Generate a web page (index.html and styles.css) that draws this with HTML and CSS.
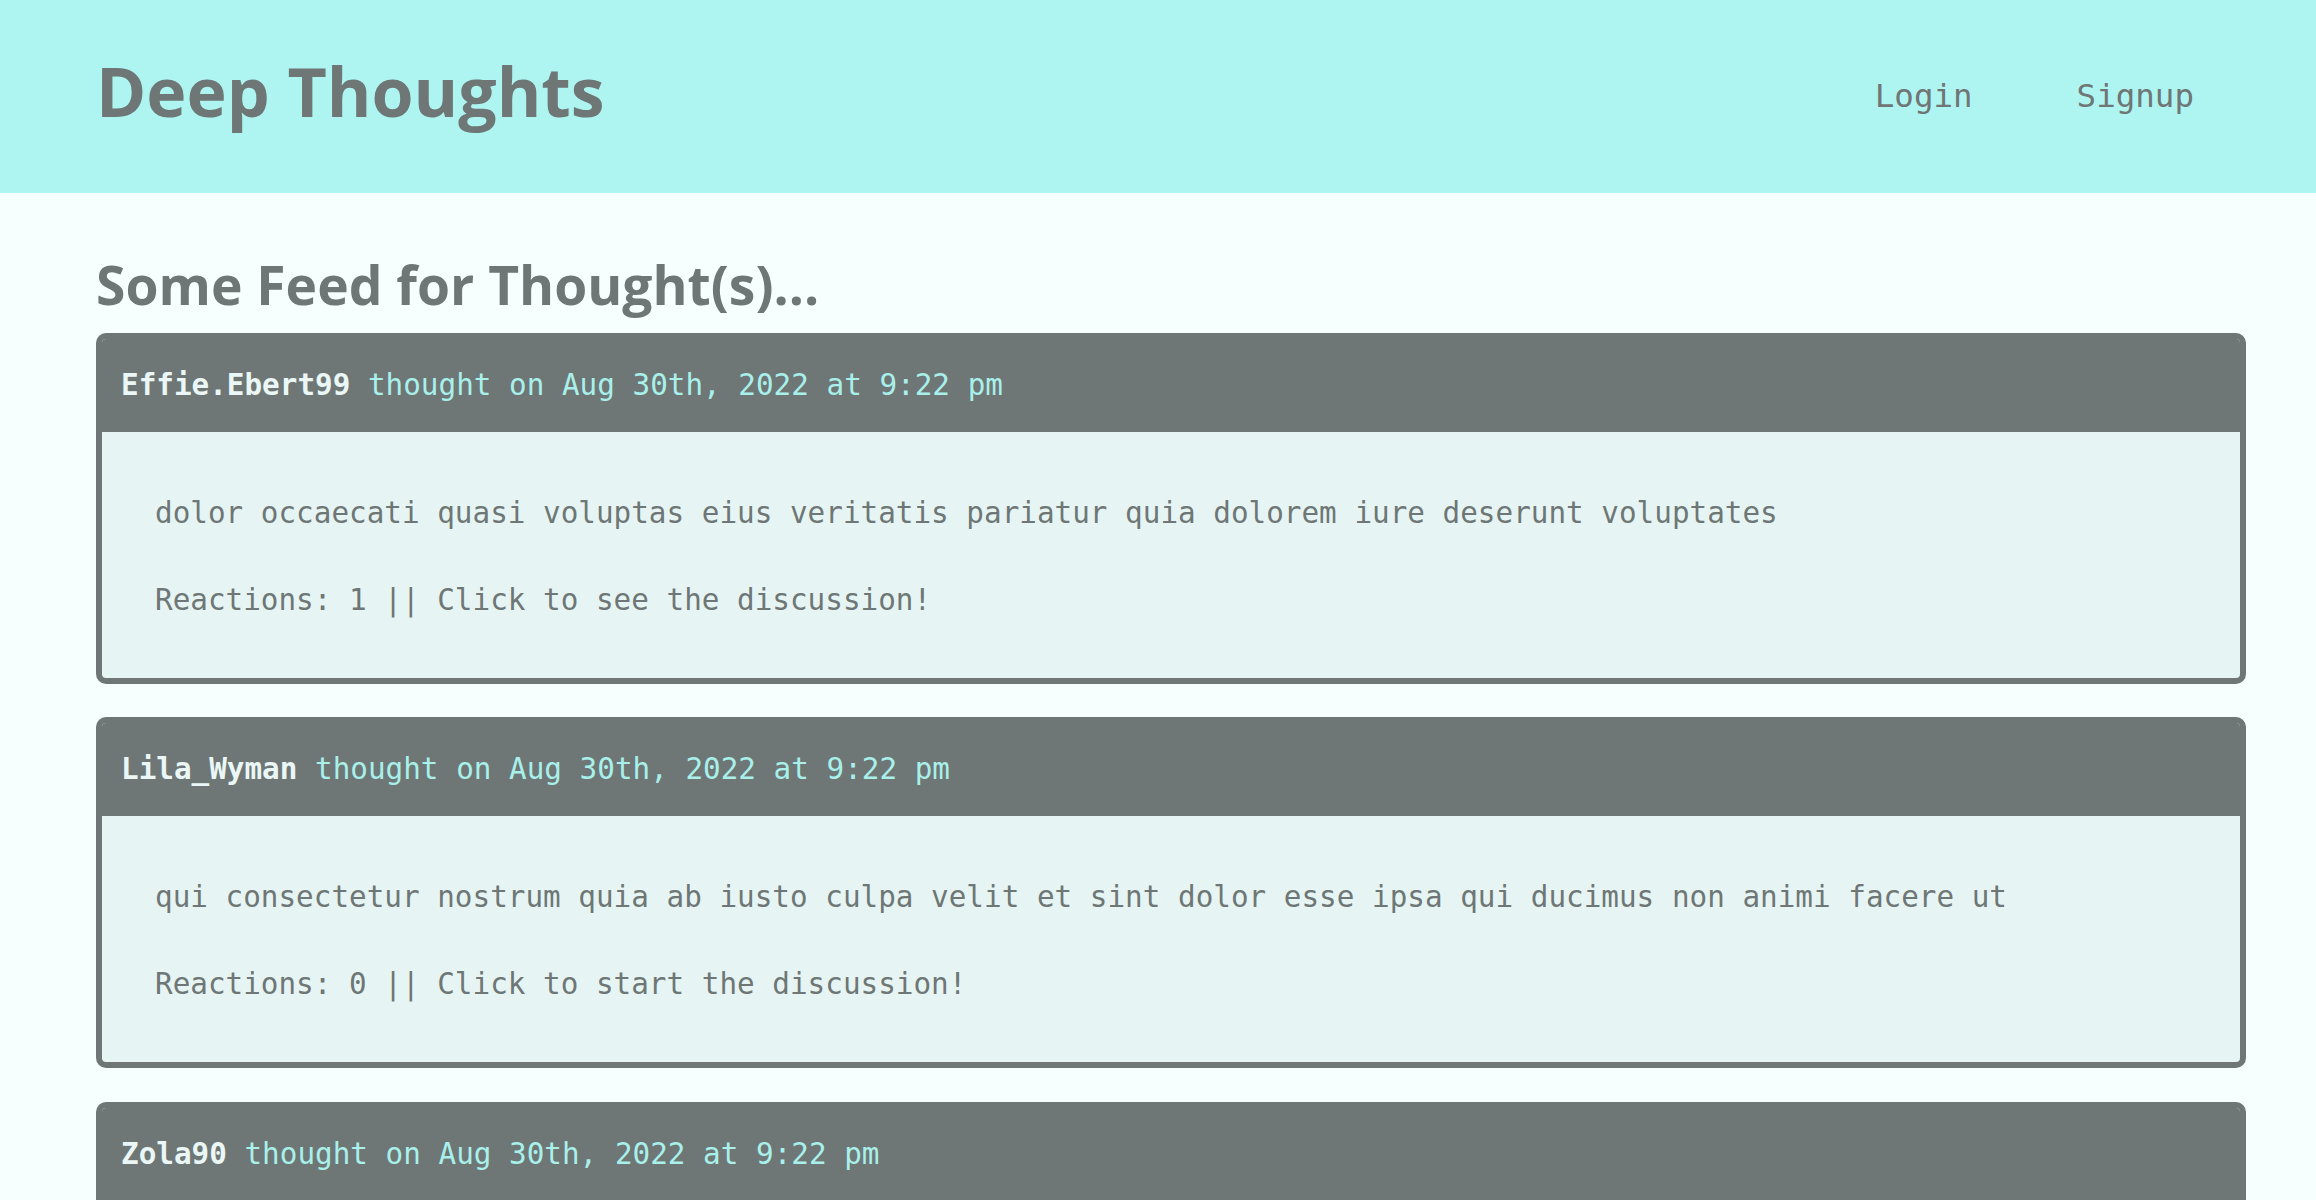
FILE: index.html
```html
<!DOCTYPE html>
<html lang="en">
<head>
<meta charset="utf-8">
<title>Deep Thoughts</title>
<link rel="stylesheet" href="styles.css">
</head>
<body>
<header class="site-header">
  <h1 class="brand">Deep Thoughts</h1>
  <nav class="nav">
    <a class="nav-link" href="#">Login</a>
    <a class="nav-link" href="#">Signup</a>
  </nav>
</header>
<main class="main">
  <h2 class="feed-title">Some Feed for Thought(s)...</h2>
  <div class="feed">
    <article class="card">
      <div class="card-header"><span class="username">Effie.Ebert99</span> thought on Aug 30th, 2022 at 9:22 pm</div>
      <div class="card-body">
        <p>dolor occaecati quasi voluptas eius veritatis pariatur quia dolorem iure deserunt voluptates</p>
        <p>Reactions: 1 || Click to see the discussion!</p>
      </div>
    </article>
    <article class="card">
      <div class="card-header"><span class="username">Lila_Wyman</span> thought on Aug 30th, 2022 at 9:22 pm</div>
      <div class="card-body">
        <p>qui consectetur nostrum quia ab iusto culpa velit et sint dolor esse ipsa qui ducimus non animi facere ut</p>
        <p>Reactions: 0 || Click to start the discussion!</p>
      </div>
    </article>
    <article class="card">
      <div class="card-header"><span class="username">Zola90</span> thought on Aug 30th, 2022 at 9:22 pm</div>
      <div class="card-body">
        <p>Reactions: 0 || Click to start the discussion!</p>
      </div>
    </article>
  </div>
</main>
</body>
</html>
```
FILE: styles.css
```css
* { box-sizing: border-box; }
html, body { margin: 0; padding: 0; }
body {
  background: #f6fffe;
  color: #6e7775;
  font-family: "DejaVu Sans Mono", "Liberation Mono", monospace;
}
.site-header {
  height: 193px;
  background: #aef5f1;
  display: flex;
  justify-content: space-between;
  align-items: center;
  padding: 0 122px 11px 96px;
}
.brand {
  margin: 0;
  font-family: "Open Sans", Lato, sans-serif;
  font-weight: 700;
  font-size: 68px;
  line-height: 1.2;
  color: #6e7775;
}
.nav {
  display: flex;
  gap: 104px;
  padding-top: 9px;
}
.nav-link {
  font-family: "DejaVu Sans Mono", monospace;
  font-size: 32.5px;
  color: #6f7675;
  text-decoration: none;
}
.main {
  padding: 0 70px 0 96px;
}
.feed-title {
  margin: 60px 0 15.5px;
  font-family: "Open Sans", Lato, sans-serif;
  font-weight: 700;
  font-size: 53.4px;
  line-height: 1.2;
  color: #6e7775;
}
.feed {
  display: flex;
  flex-direction: column;
  gap: 33.5px;
}
.card {
  border: 6px solid #6e7775;
  border-radius: 10px;
  overflow: hidden;
  background: #e6f5f4;
}
.card-header {
  background: #6e7775;
  color: #a9f0eb;
  font-size: 29.3px;
  line-height: 44px;
  margin: 0 -6px;
  padding: 24px 19px 25px 25px;
}
.username {
  color: #eaf7f6;
  font-weight: 700;
}
.card-body {
  padding: 59px 53px 56px;
  font-size: 29.3px;
  line-height: 44px;
  color: #6e7775;
}
.card-body p {
  margin: 0;
}
.card-body p + p {
  margin-top: 43px;
}
```
